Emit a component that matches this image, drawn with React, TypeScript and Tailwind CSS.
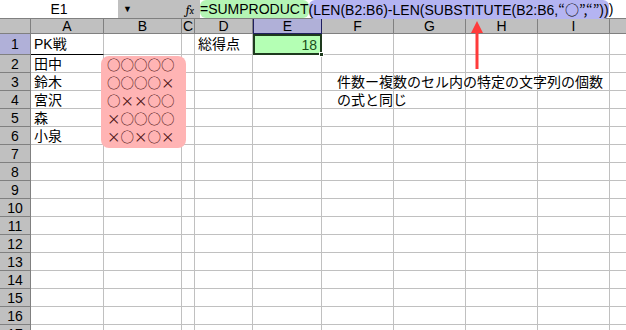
import React from "react";

const COLS = [
  { key: "A", w: 73 },
  { key: "B", w: 78 },
  { key: "C", w: 13 },
  { key: "D", w: 58 },
  { key: "E", w: 69 },
  { key: "F", w: 72 },
  { key: "G", w: 72 },
  { key: "H", w: 72 },
  { key: "I", w: 72 },
  { key: "J", w: 72 },
];

const ROWS = Array.from({ length: 17 }, (_, i) => i + 1);

const names: Record<number, string> = { 1: "PK戦", 2: "田中", 3: "鈴木", 4: "宮沢", 5: "森", 6: "小泉" };
const marks: Record<number, string> = {
  2: "○○○○○",
  3: "○○○○×",
  4: "○××○○",
  5: "×○○○○",
  6: "×○×○×",
};

const font = { fontFamily: '"Liberation Sans", "Noto Sans CJK JP", sans-serif' };
const jp = { fontFamily: '"Noto Sans CJK JP", sans-serif' };

function cellContent(row: number, col: string) {
  if (col === "A" && names[row]) return <span className="relative z-[2] pl-[3px]">{names[row]}</span>;
  if (col === "B" && marks[row])
    return (
      <span className="relative z-[2] pl-[3px] text-[13.5px] leading-[16px] text-[#4a1010]" style={jp}>
        {marks[row]}
      </span>
    );
  if (col === "D" && row === 1) return <span className="pl-[3px]">総得点</span>;
  if (col === "F" && row === 3)
    return <span className="pl-[15px] whitespace-nowrap relative z-[2]">件数ー複数のセル内の特定の文字列の個数</span>;
  if (col === "F" && row === 4) return <span className="pl-[15px] whitespace-nowrap relative z-[2]">の式と同じ</span>;
  return null;
}

export default function App() {
  return (
    <div className="w-[626px] h-[330px] overflow-hidden bg-white text-[14px] text-black relative" style={font}>
      {/* formula bar */}
      <div className="flex h-[19px] border-b border-[#808080] bg-[#c0c0c0]">
        <div className="w-[118px] bg-white flex items-center justify-center leading-none">E1</div>
        <div className="w-[82px] flex items-center">
          <span className="ml-[5px] text-[9px] leading-none">▼</span>
          <span className="ml-auto mr-[6px] italic font-serif text-[13px] leading-none">
            f<span className="text-[10px]">x</span>
          </span>
        </div>
        <div className="flex-1 bg-white flex items-center whitespace-nowrap leading-none">
          <span className="bg-[#b4f5b4] rounded-[6px] py-[2px]">=SUMPRODUCT</span>
          <span className="bg-[#b4b4f2] rounded-[6px] py-[2px]">
            (LEN(B2:B6)-LEN(SUBSTITUTE(B2:B6,<span style={jp}>“○”,“”</span>))
          </span>
          <span>)</span>
        </div>
      </div>

      {/* sheet */}
      <div
        className="grid"
        style={{
          gridTemplateColumns: `31px ${COLS.map((c) => c.w + "px").join(" ")}`,
          gridTemplateRows: `15px 21px repeat(16, 18px)`,
        }}
      >
        <div className="bg-[#c0c0c0] border-r border-b border-[#808080]" />
        {COLS.map((c) => (
          <div
            key={c.key}
            className={
              c.key === "E"
                ? "bg-[#b0b0d8] border-x border-b border-[#202060] flex items-center justify-center leading-none"
                : "bg-[#c0c0c0] border-r border-b border-[#808080] flex items-center justify-center leading-none"
            }
          >
            {c.key}
          </div>
        ))}
        {ROWS.map((r) => (
          <React.Fragment key={r}>
            <div
              className={
                (r === 1 ? "bg-[#b0b0d8] " : "bg-[#c0c0c0] ") +
                "border-r border-b border-[#808080] flex items-center justify-center leading-none"
              }
            >
              {r}
            </div>
            {COLS.map((c) =>
              c.key === "E" && r === 1 ? (
                <div
                  key={c.key}
                  className="relative bg-[#b4ffb4] border-2 border-[#1e3a1e] flex items-center justify-end pr-[3px] text-[#1b4d1b] leading-none"
                >
                  18
                  <span className="absolute -right-[4px] -bottom-[4px] w-[5px] h-[5px] bg-[#1e3a1e] border border-white" />
                </div>
              ) : (
                <div
                  key={c.key}
                  className={
                    (r === 1 && c.key === "A" ? "border-b-black " : "") +
                    "border-r border-b border-[#c0c0c0] flex items-center leading-none overflow-visible"
                  }
                >
                  {cellContent(r, c.key)}
                </div>
              )
            )}
          </React.Fragment>
        ))}
      </div>

      {/* pink shape over B2:B6 */}
      <div className="absolute left-[101px] top-[56px] w-[85px] h-[92px] rounded-[8px] bg-[#ffb4b4] z-[1]" />

      {/* red arrow */}
      <svg className="absolute left-[470px] top-[21px] z-[3]" width="14" height="49" viewBox="0 0 14 49">
        <path d="M7 0 L13 12 L8.5 12 L8.5 48 L5.5 48 L5.5 12 L1 12 Z" fill="#ff3b3b" />
      </svg>
    </div>
  );
}
